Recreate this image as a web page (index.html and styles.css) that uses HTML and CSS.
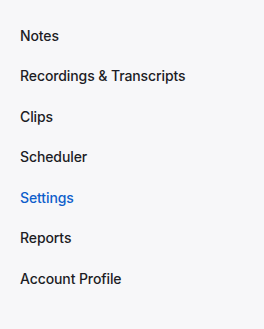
FILE: index.html
```html
<!DOCTYPE html>
<html lang="en">
<head>
  <meta charset="UTF-8" />
  <title>Menu</title>
  <link rel="stylesheet" href="styles.css">
</head>
<body>
  <nav class="side-menu">
    <a class="menu-item" href="#">Notes</a>
    <a class="menu-item" href="#">Recordings &amp; Transcripts</a>
    <a class="menu-item" href="#">Clips</a>
    <a class="menu-item" href="#">Scheduler</a>
    <a class="menu-item active" href="#">Settings</a>
    <a class="menu-item" href="#">Reports</a>
    <a class="menu-item" href="#">Account Profile</a>
  </nav>
</body>
</html>
```

FILE: styles.css
```css
* {
  box-sizing: border-box;
}

body {
  margin: 0;
  background: #f7f7f9;
  font-family: Inter, "Noto Sans", sans-serif;
}

.side-menu {
  display: flex;
  flex-direction: column;
  padding: 15px 0 0 20px;
}

.menu-item {
  height: 40.5px;
  display: flex;
  align-items: center;
  font-size: 14px;
  font-weight: 500;
  letter-spacing: -0.1px;
  color: #1d1d25;
  text-decoration: none;
}

.menu-item.active {
  color: #0e5ecb;
}
```
